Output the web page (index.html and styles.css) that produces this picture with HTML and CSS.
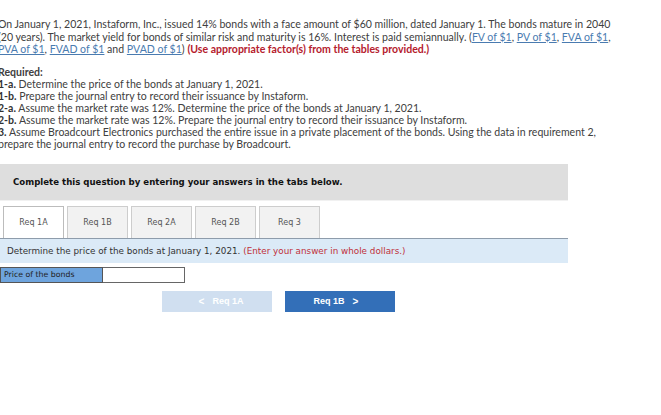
FILE: index.html
```html
<!DOCTYPE html>
<html>
<head>
<meta charset="utf-8">
<link rel="stylesheet" href="styles.css">
</head>
<body>
<div class="page">
  <p class="intro">On January 1, 2021, Instaform, Inc., issued 14% bonds with a face amount of $60 million, dated January 1. The bonds mature in 2040 (20 years). The market yield for bonds of similar risk and maturity is 16%. Interest is paid semiannually. (<a href="#">FV of $1</a>, <a href="#">PV of $1</a>, <a href="#">FVA of $1</a>, <a href="#">PVA of $1</a>, <a href="#">FVAD of $1</a> and <a href="#">PVAD of $1</a>) <span class="warn">(Use appropriate factor(s) from the tables provided.)</span></p>
  <div class="required">
    <div class="req-title">Required:</div>
    <div><b>1-a.</b> Determine the price of the bonds at January 1, 2021.</div>
    <div><b>1-b.</b> Prepare the journal entry to record their issuance by Instaform.</div>
    <div><b>2-a.</b> Assume the market rate was 12%. Determine the price of the bonds at January 1, 2021.</div>
    <div><b>2-b.</b> Assume the market rate was 12%. Prepare the journal entry to record their issuance by Instaform.</div>
    <div><b>3.</b> Assume Broadcourt Electronics purchased the entire issue in a private placement of the bonds. Using the data in requirement 2, prepare the journal entry to record the purchase by Broadcourt.</div>
  </div>
  <div class="widget">
    <div class="banner">Complete this question by entering your answers in the tabs below.</div>
    <div class="tabs">
      <div class="tab active">Req 1A</div>
      <div class="tab">Req 1B</div>
      <div class="tab">Req 2A</div>
      <div class="tab">Req 2B</div>
      <div class="tab">Req 3</div>
    </div>
    <div class="instr">Determine the price of the bonds at January 1, 2021. <span class="hint">(Enter your answer in whole dollars.)</span></div>
    <div class="row">
      <div class="label">Price of the bonds</div>
      <div class="input"></div>
    </div>
    <div class="nav">
      <div class="btn prev"><span class="chev">&lt;</span> Req 1A</div>
      <div class="btn next">Req 1B <span class="chev">&gt;</span></div>
    </div>
  </div>
</div>
</body>
</html>
```
FILE: styles.css
```css
html, body {
  margin: 0;
  padding: 0;
  background: #fff;
}
.page {
  padding-top: 18px;
  font-family: "Lato", "Open Sans", sans-serif;
  color: #404040;
}
.intro {
  margin: 0 0 10px -2px;
  width: 614px;
  font-size: 10.55px;
  line-height: 12.5px;
}
.intro a {
  color: #4a7bb0;
  text-decoration: underline;
}
.warn {
  color: #b5202d;
  font-weight: bold;
}
.required {
  margin: 0 0 14px -2px;
  width: 614px;
  font-size: 10.55px;
  line-height: 12px;
}
.req-title {
  font-weight: bold;
}
.required b {
  font-weight: bold;
  color: #333;
}
.widget {
  width: 568px;
  font-family: "DejaVu Sans", Verdana, sans-serif;
}
.banner {
  height: 37px;
  background: #dedede;
  border-bottom: 1px solid #f1f1f1;
  box-sizing: border-box;
  padding-left: 13px;
  display: flex;
  align-items: center;
  font-size: 8.6px;
  font-weight: bold;
  color: #111;
}
.tabs {
  margin-top: 5px;
  display: flex;
  gap: 3px;
  padding-left: 3px;
  height: 32px;
}
.tab {
  width: 61px;
  box-sizing: border-box;
  border: 1px solid #cdcdcd;
  border-bottom: none;
  background: #f2f2f2;
  display: flex;
  align-items: center;
  justify-content: center;
  font-size: 8px;
  color: #555;
}
.tab.active {
  background: #fff;
  border-color: #bcbcbc;
}
.instr {
  height: 25px;
  box-sizing: border-box;
  background: #dbeaf7;
  border-top: 1px solid #8e9cab;
  padding-left: 7px;
  display: flex;
  align-items: center;
  font-size: 8.8px;
  color: #333;
  white-space: pre;
}
.hint {
  color: #c0303a;
}
.row {
  margin-top: 4px;
  display: flex;
  height: 16px;
}
.label {
  width: 103px;
  box-sizing: border-box;
  background: #6ea4dd;
  border: 1px solid #555;
  padding-left: 3px;
  font-size: 7.8px;
  color: #222;
  display: flex;
  align-items: center;
}
.input {
  width: 82px;
  box-sizing: border-box;
  background: #fff;
  border: 1px solid #666;
  border-left: none;
}
.nav {
  margin-top: 8px;
  display: flex;
  gap: 13px;
  padding-left: 162px;
}
.btn {
  width: 110px;
  height: 21px;
  display: flex;
  align-items: center;
  justify-content: center;
  font-family: "Liberation Sans", Arial, sans-serif;
  font-size: 9px;
  font-weight: bold;
  color: #fff;
}
.prev {
  background: #d0dff0;
}
.next {
  background: #336fb8;
}
.chev {
  margin: 0 8px;
  font-size: 10px;
}
```
